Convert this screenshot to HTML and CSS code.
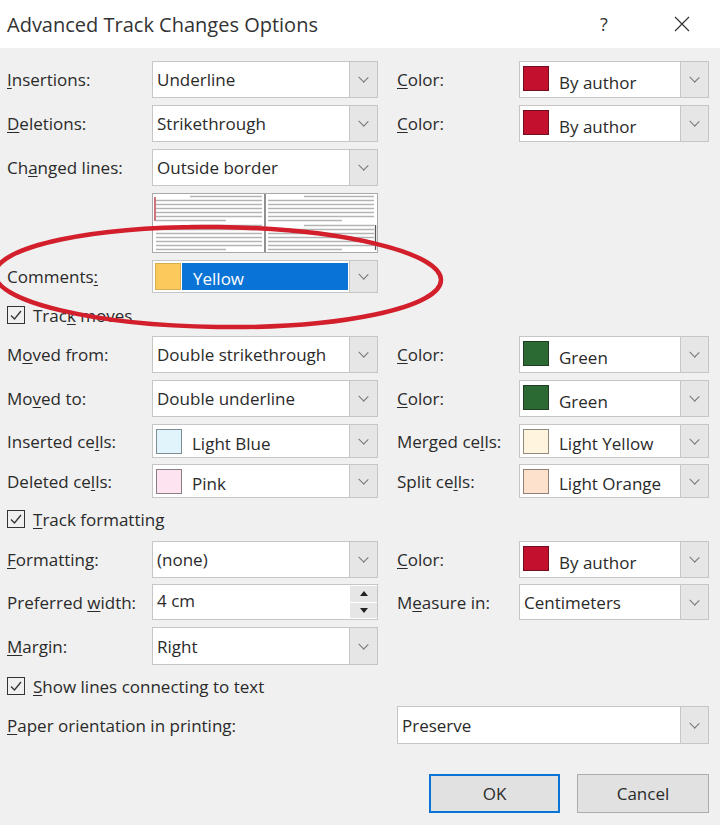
FILE: index.html
```html
<!DOCTYPE html>
<html lang="en">
<head>
    <meta charset="UTF-8">
    <title>Advanced Track Changes Options</title>
    <link rel="stylesheet" href="styles.css">
</head>
<body>
    <div class="dialog">
        <header class="titlebar">
            <h1>Advanced Track Changes Options</h1>
            <span class="help">?</span>
            <span class="close">
                <svg width="16" height="16" viewBox="0 0 16 16"><path d="M1 1L15 15M15 1L1 15" stroke="#333" stroke-width="1.2" fill="none"/></svg>
            </span>
        </header>

        <div class="form">
            <div class="row">
                <label><u>I</u>nsertions:</label>
                <div class="select"><span class="value">Underline</span><span class="arrow"></span></div>
                <span></span>
                <label><u>C</u>olor:</label>
                <div class="select"><span class="swatch red"></span><span class="value low">By author</span><span class="arrow"></span></div>
            </div>
            <div class="row">
                <label><u>D</u>eletions:</label>
                <div class="select"><span class="value">Strikethrough</span><span class="arrow"></span></div>
                <span></span>
                <label><u>C</u>olor:</label>
                <div class="select"><span class="swatch red"></span><span class="value low">By author</span><span class="arrow"></span></div>
            </div>
            <div class="row">
                <label>Ch<u>a</u>nged lines:</label>
                <div class="select"><span class="value">Outside border</span><span class="arrow"></span></div>
            </div>
            <div class="row preview-row">
                <span></span>
                <svg class="preview" width="226" height="60" viewBox="0 0 226 60">
                    <rect x="0.5" y="0.5" width="225" height="59" fill="#fff" stroke="#a9a9a9"/>
                    <g stroke="#b4b4b4" stroke-width="1.3">
                        <!-- left page -->
                        <path d="M38 3.5H110M4 7.5H110M4 11.5H110M4 15.5H110M4 19.5H110M4 23.5H110M4 27.5H74"/>
                        <path d="M38 32.5H110M4 36.5H110M4 40.5H110M4 44.5H110M4 48.5H110M4 52.5H110M4 56.5H74"/>
                        <!-- right page -->
                        <path d="M152 3.5H222M116 7.5H222M116 11.5H222M116 15.5H222M116 19.5H222M116 23.5H222M116 27.5H190"/>
                        <path d="M152 32.5H222M116 36.5H222M116 40.5H222M116 44.5H222M116 48.5H222M116 52.5H222M116 56.5H190"/>
                    </g>
                    <path d="M113 1V59" stroke="#555" stroke-width="1.3"/>
                    <path d="M3 4V28" stroke="#b02a3a" stroke-width="1.3"/>
                    <path d="M223.5 32V57" stroke="#555" stroke-width="1.3"/>
                </svg>
            </div>
            <div class="row comments-row">
                <label>Comments<u>:</u></label>
                <div class="select"><span class="swatch yellow"></span><span class="value picked">Yellow</span><span class="arrow"></span></div>
            </div>
            <div class="check-row moves">
                <span class="box"><svg width="14" height="14" viewBox="0 0 14 14"><path d="M2 7.5L5.5 11L12 3" stroke="#333" stroke-width="1.3" fill="none"/></svg></span>
                <span>Trac<u>k</u> moves</span>
            </div>
            <div class="row moved-from">
                <label>M<u>o</u>ved from:</label>
                <div class="select"><span class="value">Double strikethrough</span><span class="arrow"></span></div>
                <span></span>
                <label><u>C</u>olor:</label>
                <div class="select"><span class="swatch green"></span><span class="value low">Green</span><span class="arrow"></span></div>
            </div>
            <div class="row">
                <label>Mo<u>v</u>ed to:</label>
                <div class="select"><span class="value">Double underline</span><span class="arrow"></span></div>
                <span></span>
                <label><u>C</u>olor:</label>
                <div class="select"><span class="swatch green"></span><span class="value low">Green</span><span class="arrow"></span></div>
            </div>
            <div class="row cells">
                <label>Inserted ce<u>l</u>ls:</label>
                <div class="select"><span class="swatch light-blue"></span><span class="value low">Light Blue</span><span class="arrow"></span></div>
                <span></span>
                <label>Merged ce<u>l</u>ls:</label>
                <div class="select"><span class="swatch light-yellow"></span><span class="value low">Light Yellow</span><span class="arrow"></span></div>
            </div>
            <div class="row cells tight">
                <label>Deleted ce<u>l</u>ls:</label>
                <div class="select"><span class="swatch pink"></span><span class="value low">Pink</span><span class="arrow"></span></div>
                <span></span>
                <label>Split ce<u>l</u>ls:</label>
                <div class="select"><span class="swatch light-orange"></span><span class="value low">Light Orange</span><span class="arrow"></span></div>
            </div>
            <div class="check-row formatting-check">
                <span class="box"><svg width="14" height="14" viewBox="0 0 14 14"><path d="M2 7.5L5.5 11L12 3" stroke="#333" stroke-width="1.3" fill="none"/></svg></span>
                <span><u>T</u>rack formatting</span>
            </div>
            <div class="row formatting">
                <label><u>F</u>ormatting:</label>
                <div class="select"><span class="value">(none)</span><span class="arrow"></span></div>
                <span></span>
                <label><u>C</u>olor:</label>
                <div class="select"><span class="swatch red"></span><span class="value low">By author</span><span class="arrow"></span></div>
            </div>
            <div class="row width-row">
                <label>Preferred <u>w</u>idth:</label>
                <div class="select spin"><span class="value top">4 cm</span>
                    <span class="spin-buttons">
                        <span class="spin-btn"><svg width="8" height="5" viewBox="0 0 8 5"><path d="M0 5L4 0L8 5Z" fill="#222"/></svg></span>
                        <span class="spin-btn"><svg width="8" height="5" viewBox="0 0 8 5"><path d="M0 0L4 5L8 0Z" fill="#222"/></svg></span>
                    </span>
                </div>
                <span></span>
                <label>M<u>e</u>asure in:</label>
                <div class="select"><span class="value">Centimeters</span><span class="arrow"></span></div>
            </div>
            <div class="row margin-row">
                <label><u>M</u>argin:</label>
                <div class="select"><span class="value">Right</span><span class="arrow"></span></div>
            </div>
            <div class="check-row lines-check">
                <span class="box"><svg width="14" height="14" viewBox="0 0 14 14"><path d="M2 7.5L5.5 11L12 3" stroke="#333" stroke-width="1.3" fill="none"/></svg></span>
                <span><u>S</u>how lines connecting to text</span>
            </div>
            <div class="row paper-row">
                <label class="wide"><u>P</u>aper orientation in printing:</label>
                <div class="select wide-select"><span class="value">Preserve</span><span class="arrow"></span></div>
            </div>
            <div class="buttons">
                <button class="default">OK</button>
                <button>Cancel</button>
            </div>
        </div>

        <!-- hand-drawn highlight round the Comments option -->
        <svg class="mark" width="720" height="825" viewBox="0 0 720 825">
            <ellipse cx="218" cy="277" rx="223" ry="50" fill="none" stroke="#d21f2b" stroke-width="4.5" transform="rotate(0.8 218 277)"/>
        </svg>
    </div>
</body>
</html>
```

FILE: styles.css
```css
* {
    box-sizing: border-box;
}
body {
    margin: 0;
    font-family: 'Open Sans', 'Noto Sans', sans-serif;
    font-size: 17px;
    color: #2a2a2a;
    background: #f0f0f0;
}
u {
    text-decoration-thickness: 1px;
    text-underline-offset: 2px;
}
.dialog {
    position: relative;
    width: 720px;
    height: 825px;
    overflow: hidden;
    background: #f0f0f0;
}
.titlebar {
    height: 48px;
    background: #fff;
    display: flex;
    align-items: center;
    padding-left: 7px;
}
.titlebar h1 {
    flex: 1;
    margin: 0;
    font-size: 20px;
    font-weight: normal;
    color: #333;
}
.help {
    width: 30px;
    text-align: center;
    font-size: 18px;
    color: #333;
}
.close {
    width: 30px;
    margin-left: 48px;
    margin-right: 23px;
    display: flex;
    justify-content: center;
}
.form {
    padding: 13px 11px 0 7px;
}
.row {
    display: grid;
    grid-template-columns: 145px 226px 19px 122px 190px;
    height: 37px;
    margin-bottom: 7px;
}
.row label {
    align-self: center;
    white-space: nowrap;
}
.select {
    display: flex;
    background: #fff;
    border: 1px solid #c6c6c6;
    min-width: 0;
}
.select .value {
    flex: 1;
    display: flex;
    align-items: center;
    padding-left: 4px;
    white-space: nowrap;
}
.select .value.low {
    padding-top: 5px;
    padding-left: 10px;
}
.select .value.top {
    align-items: flex-start;
    padding-top: 4px;
}
.select .arrow {
    width: 28px;
    background: #e6e6e6;
    border-left: 1px solid #c6c6c6;
    display: flex;
    align-items: center;
    justify-content: center;
}
.select .arrow::before {
    content: "";
    width: 6px;
    height: 6px;
    border-right: 1px solid #777;
    border-bottom: 1px solid #777;
    transform: translateY(-2px) rotate(45deg) scaleX(1.1);
}
.swatch {
    width: 26px;
    height: 25px;
    margin: 4px 0 0 3px;
    border: 1px solid rgba(0, 0, 0, 0.4);
    flex: none;
}
.swatch.red { background: #c3102f; border-color: #6e0f1e; }
.swatch.green { background: #2c6a33; border-color: #1e3d22; }
.swatch.yellow { background: #fbc95c; border-color: #d8ad52; margin: 2px 0 2px 2px; height: auto; }
.swatch.light-blue { background: #e1f3fb; border-color: #7d8d94; }
.swatch.light-yellow { background: #fff5df; border-color: #8f8a7d; }
.swatch.pink { background: #fce3ef; border-color: #8c7d84; }
.swatch.light-orange { background: #fde1cc; border-color: #8f8074; }

.preview-row {
    height: 60px;
}
.comments-row {
    height: 33px;
}
.select .value.picked {
    margin: 2px 1px 2px 1px;
    padding: 3px 0 0 11px;
    background: #0a74d6;
    color: #fff;
}
.check-row {
    display: flex;
    align-items: center;
    gap: 8px;
    height: 18px;
}
.check-row .box {
    width: 18px;
    height: 18px;
    border: 1px solid #333;
    display: flex;
    align-items: center;
    justify-content: center;
}
.moves { margin: 13px 0 12px; }
.moved-from { margin-bottom: 7px; }
.cells { height: 34px; margin-bottom: 6px; }
.cells.tight { margin-bottom: 12px; }
.formatting-check { margin-bottom: 13px; }
.formatting { margin-bottom: 6px; }
.width-row { height: 36px; }
.margin-row { height: 38px; }
.lines-check { margin: 12px 0 11px; }
.paper-row { height: 38px; }
.paper-row .wide { grid-column: 1 / 4; }
.paper-row .wide-select { grid-column: 4 / 6; }

.spin-buttons {
    width: 28px;
    display: flex;
    flex-direction: column;
    gap: 1px;
    padding: 1px 0 1px 1px;
}
.spin-btn {
    flex: 1;
    background: #e6e6e6;
    display: flex;
    align-items: center;
    justify-content: center;
}
.buttons {
    display: flex;
    justify-content: flex-end;
    gap: 17px;
    margin-top: 30px;
}
button {
    width: 132px;
    height: 39px;
    font-family: inherit;
    font-size: 17px;
    color: #2a2a2a;
    background: #e1e1e1;
    border: 1px solid #adadad;
}
button.default {
    width: 131px;
    border: 2px solid #0a74d6;
}
.mark {
    position: absolute;
    left: 0;
    top: 0;
    pointer-events: none;
}
```
